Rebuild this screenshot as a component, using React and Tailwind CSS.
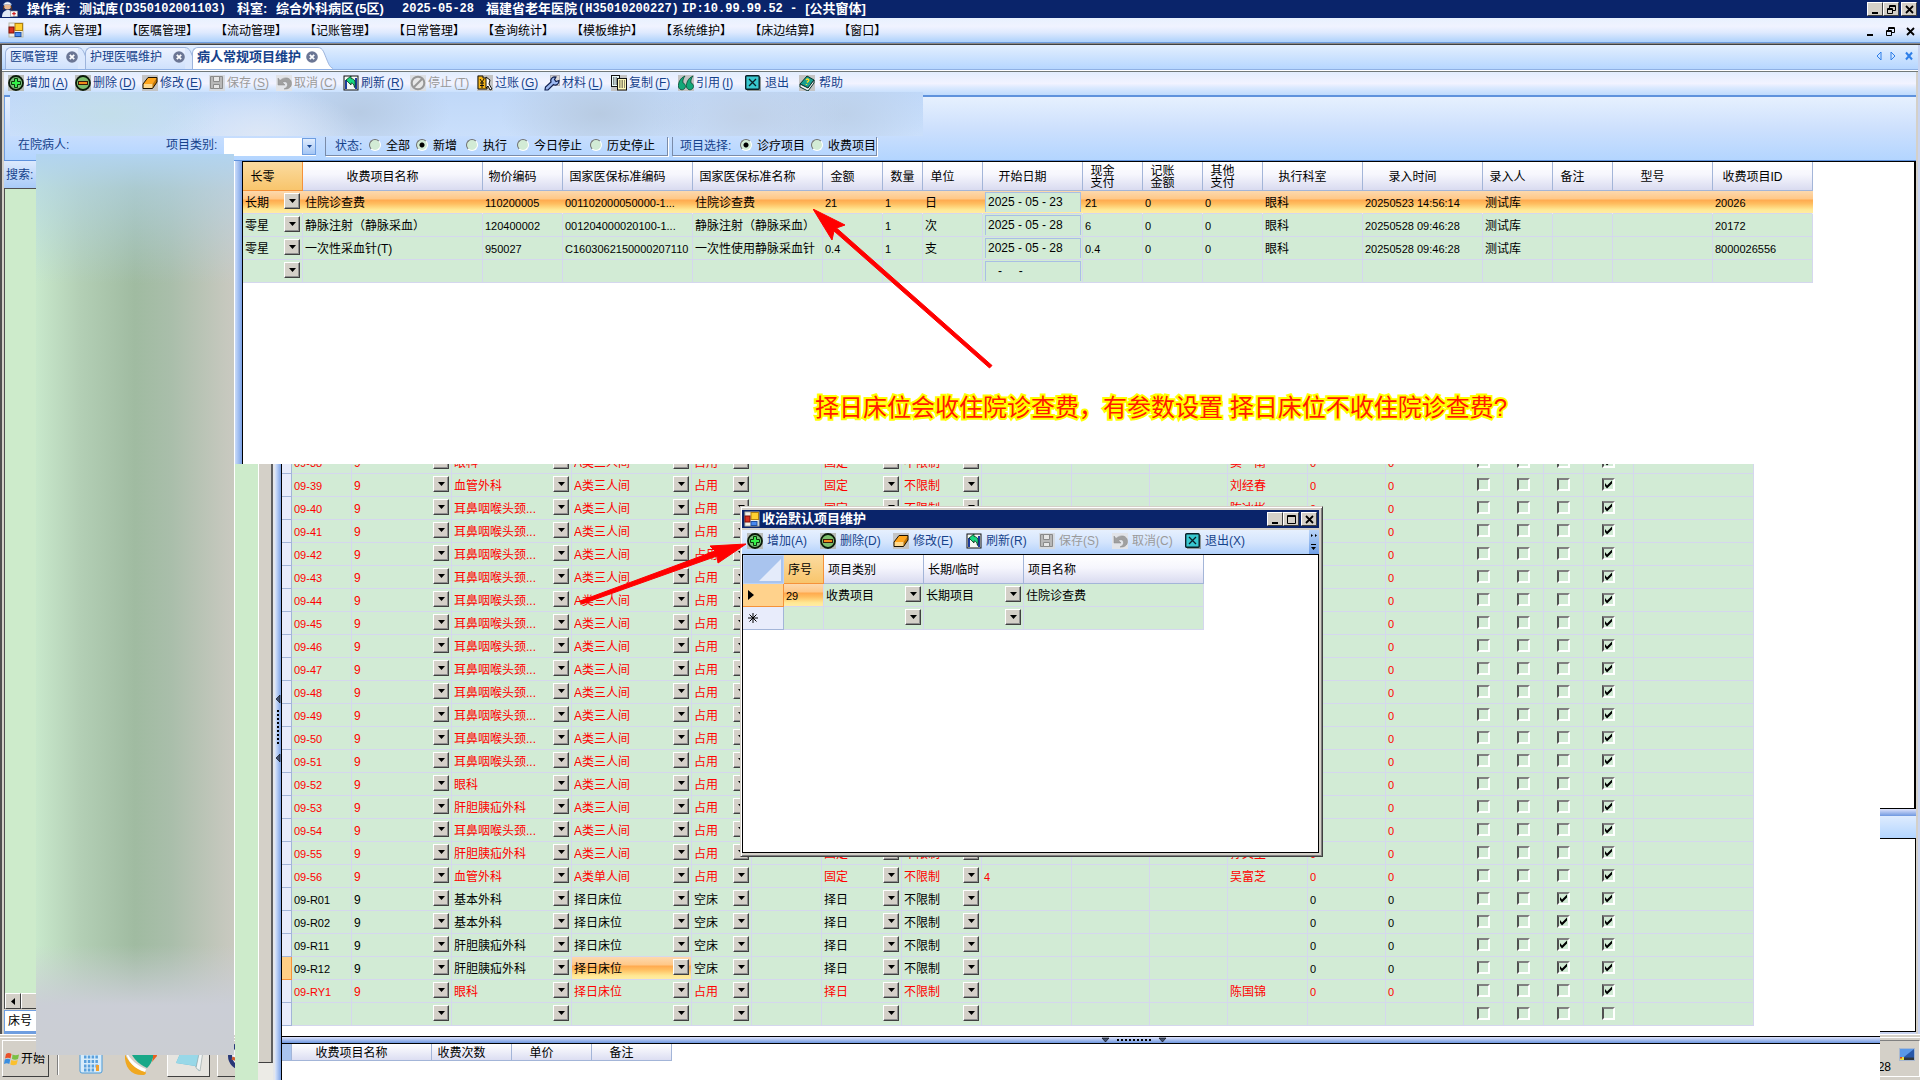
import React from "react";

const MENUS = ["病人管理", "医嘱管理", "流动管理", "记账管理", "日常管理", "查询统计", "模板维护", "系统维护", "床边结算", "窗口"];

/* ---------- icons ---------- */

function Icon({ name, className = "" }) {
  return (
    <svg viewBox="0 0 16 16" className={"size-4 shrink-0 " + className} aria-hidden="true">
      {ICONS[name]}
    </svg>
  );
}

const ICONS = {
  add: (
    <>
      <rect width="16" height="16" fill="#b9bdb9" />
      <circle cx="8" cy="8" r="7" fill="#7cbf7c" stroke="#0a1a0a" strokeWidth="1.8" />
      <path d="M6.5 3.5h3v3h3v3h-3v3h-3v-3h-3v-3h3z" fill="#35f04a" stroke="#0a3a0a" />
    </>
  ),
  remove: (
    <>
      <rect width="16" height="16" fill="#b9bdb9" />
      <circle cx="8" cy="8" r="7" fill="#7cbf6c" stroke="#0a1a0a" strokeWidth="1.8" />
      <rect x="3.5" y="6.5" width="9" height="3" fill="#f08a18" stroke="#3a1a0a" />
    </>
  ),
  edit: (
    <>
      <rect width="16" height="16" fill="#c4c4c4" />
      <path d="M1 9L6 2.500H15L10.500 9z" fill="#ffa51c" />
      <path d="M1 9H10.500V13.500H1z" fill="#ffd98c" />
      <path d="M10.500 9L15 2.500V7L10.500 13.500z" fill="#c87800" />
      <path d="M1 9L6 2.500H15V7L10.500 13.500H1z" fill="none" stroke="#1a1000" />
    </>
  ),
  save: (
    <>
      <rect width="16" height="16" fill="#d6dae0" />
      <path d="M1.500 1.500h12v12h-12z" fill="#b8b8b8" stroke="#8a8a8a" />
      <path d="M4.500 1.500h6v5h-6zM4.500 9.500h6v4h-6z" fill="#e6e6e6" stroke="#8a8a8a" />
    </>
  ),
  undo: (
    <>
      <rect width="16" height="16" fill="#e2e4e8" />
      <path d="M2 3v7h7L6.500 7.500c3-2 5.500 0 5 3-.5 1.500-1.500 2.500-3.500 3.500 4.500.5 7.500-2 7.500-5.500 0-6-7-7.500-11.500-3z" fill="#a0a0a0" stroke="#888" strokeWidth=".5" />
    </>
  ),
  refresh: (
    <>
      <rect x="1" y="1" width="14" height="14" fill="#f4f8f4" stroke="#111" />
      <path d="M2 5h2v9H2zM12 3h2v11h-2z" fill="#1c3c9c" />
      <path d="M3 5l5-4v2.500c4 0 5 4 3.500 9-.5-3-1.500-4.500-3.500-4.500v2z" fill="#18d880" stroke="#083018" strokeWidth=".8" />
    </>
  ),
  stop: (
    <>
      <rect width="16" height="16" fill="#dcdfe4" />
      <circle cx="8" cy="8" r="6.300" fill="#e8e8e8" stroke="#979797" strokeWidth="2" />
      <path d="M12 4L4 12" stroke="#979797" strokeWidth="2" />
    </>
  ),
  post: (
    <>
      <rect width="16" height="16" fill="#c4c4c4" />
      <path d="M1 1h5v2h4v11H1z" fill="#f5b418" stroke="#111" />
      <path d="M3 4l2 3 2-3M3 8h4M3 10.500h4M5 7v6" stroke="#111" fill="none" />
      <path d="M9 2l4 3-1 4 3 5-2 1-2-4-2 2z" fill="#fff" stroke="#111" />
    </>
  ),
  wrench: (
    <>
      <rect x="6.500" y=".5" width="9" height="10" fill="#dcd8d4" stroke="#b0b0b8" />
      <path d="M1 15l.5-3L7 7C6 4 8.500 1.500 12 2L10.500 4.500l1.500 2 3-1c0 4-3 5.500-5.500 4L4 15z" fill="#9db8f0" stroke="#102050" strokeWidth="1.200" />
    </>
  ),
  copy: (
    <>
      <rect width="16" height="16" fill="#c4c4c4" />
      <rect x=".5" y=".5" width="8" height="11" fill="#e8fafa" stroke="#111" />
      <rect x="6.500" y="3.500" width="9" height="11.500" fill="#fff8b8" stroke="#111" />
      <path d="M2 3h4M2 5h4M2 7h4M2 9h4M8 6h6M8 8h6M8 10h6M8 12h6" stroke="#222" strokeDasharray="1.500 1" />
    </>
  ),
  quote: (
    <>
      <rect width="16" height="16" fill="#c4c4c4" />
      <path d="M7 1C2 3 0 8 .5 12c1 4 6.500 3.500 7-.5 0-2-1-3-2.500-3.500C4.500 5 5.500 3 7 1zM15 1c-5 2-7 7-6.500 11 1 4 6.500 3.500 7-.5 0-2-1-3-2.500-3.500C12.500 5 13.500 3 15 1z" fill="#12a878" stroke="#064a34" strokeWidth=".8" />
    </>
  ),
  exit: (
    <>
      <rect x="2" y="2" width="14" height="14" fill="#909898" />
      <rect x=".7" y=".7" width="13.500" height="13.500" rx="1" fill="#38c8d0" stroke="#0a2028" strokeWidth="1.400" />
      <path d="M4 4l7 7M11 4l-7 7" stroke="#0a2028" strokeWidth="1.300" />
    </>
  ),
  help: (
    <>
      <rect width="16" height="16" fill="#c4c4c4" />
      <path d="M1 9l7-8 7 4-6 8z" fill="#18a090" stroke="#04302c" />
      <path d="M1 9v3l8 4 6-8V5l-6 8z" fill="#f4f4f4" stroke="#04302c" />
      <path d="M7 5c2-2 4 0 2 1.500l-1 1M7.500 9v1" stroke="#ffe020" strokeWidth="1.400" fill="none" />
    </>
  ),
  app: (
    <>
      <rect x="1" y="1" width="14" height="14" fill="#f0f0e8" stroke="#b8b8a8" />
      <rect x="7" y="1.500" width="7.500" height="7" fill="#ffd030" stroke="#b08010" />
      <rect x="1" y="5" width="5" height="6" fill="#d83020" stroke="#801008" />
      <rect x="7" y="10.500" width="6" height="4" fill="#4888f0" stroke="#2050a0" />
    </>
  ),
};

/* ---------- small pieces ---------- */

function ArrowBox({ className = "" }) {
  return (
    <span
      className={
        "pointer-events-none flex size-4 shrink-0 items-center justify-center border border-t-white border-l-white border-r-[#404040] border-b-[#404040] bg-[#d4d0c8] shadow-[inset_-1px_-1px_0_#909090] " +
        className
      }
    >
      <svg viewBox="0 0 7 4" className="h-1 w-[7px]" aria-hidden="true">
        <path d="M0 0h7L3.500 4z" fill="#000" />
      </svg>
    </span>
  );
}

function DropCell({ value, label }) {
  return (
    <div className="flex h-[22px] items-center pr-[2px] pl-[2px]">
      <select aria-label={label} defaultValue={value} className="mt-0.5 h-[18px] min-w-0 flex-1 appearance-none overflow-hidden bg-transparent text-ellipsis outline-none">
        <option value={value}>{value}</option>
      </select>
      <ArrowBox className="mb-0.5" />
    </div>
  );
}

function Check({ on, label }) {
  return (
    <span className="relative mx-auto mb-0.5 block size-[13px]">
      <input
        type="checkbox"
        aria-label={label}
        defaultChecked={on}
        className="block size-[13px] appearance-none border-2 border-t-[#808080] border-r-white border-b-white border-l-[#505050] bg-[#d2ebd5]"
      />
      {on && (
        <svg viewBox="0 0 13 13" className="pointer-events-none absolute inset-0 size-[13px]" aria-hidden="true">
          <path d="M3 5v3l2 2.500L10 5.500V2.500L5 7.500z" fill="#000" />
        </svg>
      )}
    </span>
  );
}

const ascii = (s) => /^[\x00-\x7f]*$/.test(s);

function Txt({ children }) {
  return (
    <div className={"truncate pt-0.5 pl-[2px] " + (ascii(children) ? "text-[11px] leading-[14px]" : "text-xs leading-[14px]")}>{children}</div>
  );
}

const CELL = "h-[23px] border-r border-b border-[#d5d7ee] p-0 ";
const HOT = "bg-[linear-gradient(#fcd9ae_0%,#ffc888_35%,#ffab50_42%,#ffbe60_58%,#ffe894_85%,#ffeca4_100%)] ";
const HEAD =
  "h-[29px] border-r border-b border-[#a3b5d8] bg-[linear-gradient(#ffffff,#f6f6fd_45%,#d9dbf0)] p-0 pt-0.5 text-center align-middle text-xs font-normal leading-3 ";
const HEAD_HOT = "h-[29px] border-r border-b border-[#f5923a] bg-[linear-gradient(#fbdba0,#f8c56c)] p-0 pt-0.5 text-center align-middle text-xs font-normal leading-3 ";

/* ---------- window chrome ---------- */

function TitleBar() {
  const mono = "font-['Liberation_Mono'] text-xs leading-[18px] ";
  return (
    <header className="flex h-[18px] shrink-0 items-center overflow-hidden bg-[#0a246a] text-[13px] leading-[18px] font-bold whitespace-nowrap text-white">
      <svg viewBox="0 0 18 18" className="size-[18px] shrink-0" aria-hidden="true">
        <path d="M2 17c0-5 3-7 6-7s5 2 5 7z" fill="#dfe9f5" />
        <circle cx="7.500" cy="6" r="3.500" fill="#e8b890" />
        <path d="M3.500 5C4 1 11 1 11.500 5 9 4 6 4 3.500 5z" fill="#fff" stroke="#7898c8" strokeWidth=".6" />
        <path d="M4 6c-1 2-.5 3 0 4M11 6c1 2 .5 3 0 4" stroke="#6a3a18" />
        <rect x="10.500" y="11" width="7" height="5.500" fill="#f4f4f4" stroke="#888" strokeWidth=".6" />
        <path d="M14 12v3.500M12.200 13.700h3.600" stroke="#d02020" strokeWidth="1.200" />
      </svg>
      <h1 className="flex pl-[9px]">
        <span className="w-[52px]">操作者:</span>
        <span className="w-[39px]">测试库</span>
        <span className={mono + "w-[119px]"}>(D350102001103)</span>
        <span className="w-[39px]">科室:</span>
        <span className="w-[79px]">综合外科病区</span>
        <span className="w-[47px]">(5区)</span>
        <span className={mono + "w-[84px]"}>2025-05-28</span>
        <span className="w-[92px]">福建省老年医院</span>
        <span className={mono + "w-[104px]"}>(H35010200227)</span>
        <span className={mono + "pr-2"}>IP:10.99.99.52 -</span>
        <span>[公共窗体]</span>
      </h1>
      <div className="ml-auto flex pr-[3px]">
        <CaptionButton kind="min" />
        <CaptionButton kind="restore" />
        <CaptionButton kind="close" className="ml-0.5" />
      </div>
    </header>
  );
}

const GLYPHS = {
  min: <path d="M2 8h6v2H2z" fill="currentColor" />,
  max: <path d="M1.500 1.500h8v8h-8zM1.500 2.500h8" fill="none" stroke="currentColor" />,
  restore: <path d="M3.500 4V1.500h6v5H7M3.500 2.500h6M1.500 4.500h5v5h-5zM1.500 5.500h5" fill="none" stroke="currentColor" />,
  close: <path d="M2 2l7 7M9 2l-7 7" fill="none" stroke="currentColor" strokeWidth="1.800" />,
};

function CaptionButton({ kind, className = "" }) {
  return (
    <button
      type="button"
      aria-label={kind}
      className={
        "flex h-3.5 w-4 items-center justify-center border border-t-white border-l-white border-r-[#404040] border-b-[#404040] bg-[#d4d0c8] text-black " +
        className
      }
    >
      <svg viewBox="0 0 11 11" className="size-[11px]" aria-hidden="true">
        {GLYPHS[kind]}
      </svg>
    </button>
  );
}

function MenuBar() {
  return (
    <nav className="flex h-6 shrink-0 items-center bg-[linear-gradient(#e8f1fe,#f0f3ff_35%,#dfeafe_60%,#aed2fb)] pt-0.5 text-black">
      <Icon name="app" className="mb-0.5 ml-2" />
      <div className="ml-[13px] flex gap-[17px] whitespace-nowrap">
        {MENUS.map((m) => (
          <button type="button" key={m}>{`【${m}】`}</button>
        ))}
      </div>
      <div className="ml-auto flex gap-[9px] pr-1">
        {["min", "restore", "close"].map((k) => (
          <button type="button" key={k} aria-label={k} className="text-black">
            <svg viewBox="0 0 11 11" className="size-[11px]" aria-hidden="true">
              {GLYPHS[k]}
            </svg>
          </button>
        ))}
      </div>
    </nav>
  );
}

function Tab({ title, active, className }) {
  const fill = active ? "#ffffff" : "#dbe8fd";
  return (
    <div className={"flex h-[22px] shrink-0 " + className}>
      <div
        className={
          "flex flex-1 items-center justify-between rounded-tl-md border-t border-l border-[#9db4dc] pb-[3px] pl-1 whitespace-nowrap " +
          (active ? "bg-white text-[13px] font-bold" : "bg-[linear-gradient(#edf3ff,#cfe1fc)]")
        }
      >
        <button type="button">{title}</button>
        <button type="button" aria-label={"关闭" + title}>
          <svg viewBox="0 0 12 12" className="size-3" aria-hidden="true">
            <circle cx="6" cy="6" r="5.800" fill="#6b7694" />
            <path d="M3.800 3.800l4.400 4.400M8.200 3.800L3.800 8.200" stroke="#fff" strokeWidth="1.800" />
          </svg>
        </button>
      </div>
      <svg viewBox="0 0 15 22" className="h-[22px] w-[15px]" aria-hidden="true">
        <path d="M0 .5C5 .5 6 6 9 13c2 5 3 7 6 8.500V22H0z" fill={fill} />
        <path d="M0 .5C5 .5 6 6 9 13c2 5 3 7 6 8.500" fill="none" stroke="#9db4dc" />
      </svg>
    </div>
  );
}

function TabStrip() {
  return (
    <div className="flex h-6 shrink-0 items-end bg-[linear-gradient(#e3effe,#b6d6ff)] pl-[3px] text-[#15428b]">
      <Tab title="医嘱管理" className="w-[88px]" />
      <Tab title="护理医嘱维护" className="-ml-2 w-[115px]" />
      <Tab title="病人常规项目维护" active className="-ml-2 w-[141px]" />
      <div className="mb-2 ml-auto flex gap-2 pr-1 text-[#2f7fe8]">
        <button type="button" aria-label="向左">
          <svg viewBox="0 0 6 10" className="h-2.5 w-1.5" aria-hidden="true"><path d="M5 1v8L1 5z" fill="none" stroke="currentColor" /></svg>
        </button>
        <button type="button" aria-label="向右">
          <svg viewBox="0 0 6 10" className="h-2.5 w-1.5" aria-hidden="true"><path d="M1 1v8l4-4z" fill="none" stroke="currentColor" /></svg>
        </button>
        <button type="button" aria-label="关闭">
          <svg viewBox="0 0 10 10" className="size-2.5" aria-hidden="true"><path d="M2 1.500l6 7M8 1.500l-6 7" stroke="currentColor" strokeWidth="2" /></svg>
        </button>
      </div>
    </div>
  );
}

const TOOLS = [
  ["add", "增加", "A"],
  ["remove", "删除", "D"],
  ["edit", "修改", "E"],
  ["save", "保存", "S", true],
  ["undo", "取消", "C", true],
  ["refresh", "刷新", "R"],
  ["stop", "停止", "T", true],
  ["post", "过账", "G"],
  ["wrench", "材料", "L"],
  ["copy", "复制", "F"],
  ["quote", "引用", "I"],
];

function ToolBar() {
  return (
    <div className="flex h-[23px] shrink-0 items-center bg-[linear-gradient(#e2edfe,#f2f3ff_50%,#d9e8fe_70%,#bfdbfd)] pb-0.5 pl-1 whitespace-nowrap text-[#15428b]">
      {TOOLS.map(([icon, text, key, off]) => (
        <button type="button" key={text} disabled={off} className={"flex w-[67px] items-center gap-0.5 " + (off ? "text-[#9a9a9a]" : "")}>
          <Icon name={icon} />
          <span>
            {text}
            <span className="pl-0.5">
              (<u className="underline-offset-2">{key}</u>)
            </span>
          </span>
        </button>
      ))}
      <button type="button" className="flex w-[54px] items-center gap-1">
        <Icon name="exit" />
        退出
      </button>
      <button type="button" className="flex items-center gap-1">
        <Icon name="help" />
        帮助
      </button>
    </div>
  );
}

function Radio({ name, label, on, className = "" }) {
  return (
    <label className={"flex items-center gap-[5px] " + className}>
      <input
        type="radio"
        name={name}
        defaultChecked={on}
        className="mb-0.5 size-3 appearance-none rounded-full border border-t-[#707070] border-r-white border-b-white border-l-[#707070] bg-[#d2ebd5] checked:bg-[radial-gradient(circle,#000_0_2px,#d2ebd5_3px)]"
      />
      {label}
    </label>
  );
}

function FilterPanel() {
  return (
    <section className="relative flex h-[63px] shrink-0 items-end border-l border-[#6f9ee0] bg-[linear-gradient(#e6f0fe,#cde0fd_50%,#b3d5ff)] pb-1 pl-[13px] whitespace-nowrap text-black">
      {/* obscured patient banner */}
      <div className="absolute -top-[5px] left-[5px] h-11 w-[913px] bg-[radial-gradient(ellipse_110px_50px_at_100px_22px,#c3deea_0%,transparent_100%),radial-gradient(ellipse_100px_50px_at_250px_44px,#dde7f6_0%,transparent_100%),radial-gradient(ellipse_90px_50px_at_350px_20px,#b7cbe4_0%,transparent_100%),radial-gradient(ellipse_100px_50px_at_590px_22px,#b8cbe2_0%,transparent_100%),radial-gradient(ellipse_100px_50px_at_740px_24px,#c0d1e8_0%,transparent_100%),radial-gradient(ellipse_80px_50px_at_835px_22px,#bdd1ea_0%,transparent_100%),linear-gradient(#c0d8f8,#cadffb)]" />
      <span className="mb-1 w-[148px] text-[#15428b]">在院病人:</span>
      <label htmlFor="item-kind" className="mb-1 w-[58px] text-[#15428b]">项目类别:</label>
      <div className="flex h-[18px] w-[92px] border-b border-white bg-white">
        <select id="item-kind" className="min-w-0 flex-1 appearance-none bg-white" defaultValue="">
          <option value=""></option>
        </select>
        <span className="pointer-events-none flex w-3.5 items-center justify-center border border-[#6f9ee0] bg-[linear-gradient(#e0ecfd,#a3c6f5)]">
          <svg viewBox="0 0 7 4" className="h-[3px] w-[5px]" aria-hidden="true"><path d="M0 0h7L3.500 4z" fill="#15428b" /></svg>
        </span>
      </div>
      <fieldset className="ml-[9px] flex h-[19px] w-[343px] items-center border-r border-b border-l border-[#7a8ba8] pl-[9px] shadow-[1px_1px_0_#fff]">
        <span className="w-[34px] text-[#15428b]">状态:</span>
        <Radio name="state" label="全部" className="w-[47px]" />
        <Radio name="state" label="新增" on className="w-[50px]" />
        <Radio name="state" label="执行" className="w-[51px]" />
        <Radio name="state" label="今日停止" className="w-[73px]" />
        <Radio name="state" label="历史停止" />
      </fieldset>
      <fieldset className="ml-1 flex h-[19px] w-[205px] items-center border-r border-b border-l border-[#7a8ba8] pl-[7px] shadow-[1px_1px_0_#fff]">
        <span className="w-[60px] text-[#15428b]">项目选择:</span>
        <Radio name="pick" label="诊疗项目" on className="w-[71px]" />
        <Radio name="pick" label="收费项目" />
      </fieldset>
    </section>
  );
}

/* ---------- charge grid ---------- */

const CHARGE_COLS = [
  ["长零", 60], ["收费项目名称", 180], ["物价编码", 80], ["国家医保标准编码", 130], ["国家医保标准名称", 130], ["金额", 60],
  ["数量", 40], ["单位", 60], ["开始日期", 100], ["现金支付", 60], ["记账金额", 60], ["其他支付", 60], ["执行科室", 100],
  ["录入时间", 120], ["录入人", 70], ["备注", 60], ["型号", 100], ["收费项目ID", 100],
];

const CHARGES = [
  ["长期", "住院诊查费", "110200005", "001102000050000-1...", "住院诊查费", "21", "1", "日", "2025 - 05 - 23", "21", "0", "0", "眼科", "20250523 14:56:14", "测试库", "", "", "20026"],
  ["零星", "静脉注射（静脉采血）", "120400002", "001204000020100-1...", "静脉注射（静脉采血）", "6", "1", "次", "2025 - 05 - 28", "6", "0", "0", "眼科", "20250528 09:46:28", "测试库", "", "", "20172"],
  ["零星", "一次性采血针(T)", "950027", "C1603062150000207110", "一次性使用静脉采血针", "0.4", "1", "支", "2025 - 05 - 28", "0.4", "0", "0", "眼科", "20250528 09:46:28", "测试库", "", "", "8000026556"],
  ["", "", "", "", "", "", "", "", "   -     -", "", "", "", "", "", "", "", "", ""],
];

const STACKED = ["现金支付", "记账金额", "其他支付"];

function ChargeGrid() {
  return (
    <table className="w-[1570px] table-fixed border-separate border-spacing-0 text-black">
      <colgroup>
        {CHARGE_COLS.map(([n, w]) => (
          <col key={n} style={{ width: w }} />
        ))}
      </colgroup>
      <thead>
        <tr>
          {CHARGE_COLS.map(([n, w], i) => (
            <th key={n} className={i === 0 ? HEAD_HOT : HEAD}>
              <div className={w === 40 ? "" : "pr-[20px] whitespace-nowrap"}>
                {STACKED.includes(n) ? (
                  <>
                    {n.slice(0, 2)}
                    <br />
                    {n.slice(2)}
                  </>
                ) : (
                  n
                )}
              </div>
            </th>
          ))}
        </tr>
      </thead>
      <tbody>
        {CHARGES.map((row, r) => (
          <tr key={r}>
            {row.map((v, c) => (
              <td key={c} className={CELL + (r === 0 ? HOT + "border-r-transparent" : "bg-[#d2ebd5]")}>
                {c === 0 ? (
                  <DropCell value={v} label="长零" />
                ) : c === 8 ? (
                  <input
                    aria-label="开始日期"
                    defaultValue={v}
                    className="mx-0.5 block h-5 w-24 border-x border-t border-[#a9bfe4] bg-[#d2ebd5] pb-0.5 pl-0.5 outline-none"
                  />
                ) : (
                  <Txt>{v}</Txt>
                )}
              </td>
            ))}
          </tr>
        ))}
      </tbody>
    </table>
  );
}

/* ---------- bed grid ---------- */

const BED_COLS = [10, 60, 100, 120, 120, 60, 70, 80, 80, 90, 78, 78, 80, 78, 78, 40, 40, 40, 50, 120];
const ENT = "耳鼻咽喉头颈...";
const LIVER = "肝胆胰疝外科";
const bed = (no, dept, name = "", mark = "") => ({ no, dept, kind: "A类三人间", state: "占用", mode: "固定", name, mark, red: true });
const dayBed = (no, dept) => ({ no, dept, kind: "择日床位", state: "空床", mode: "择日", name: "", mark: "", day: true });

const BEDS = [
  bed("09-38", "眼科", "窦一南"),
  bed("09-39", "血管外科", "刘经春"),
  bed("09-40", ENT, "陈冰彬"),
  bed("09-41", ENT), bed("09-42", ENT), bed("09-43", ENT), bed("09-44", ENT), bed("09-45", ENT), bed("09-46", ENT),
  bed("09-47", ENT), bed("09-48", ENT), bed("09-49", ENT), bed("09-50", ENT), bed("09-51", ENT),
  bed("09-52", "眼科"),
  bed("09-53", LIVER),
  bed("09-54", ENT),
  bed("09-55", LIVER, "孙文生"),
  { ...bed("09-56", "血管外科", "吴富芝", "4"), kind: "A类单人间" },
  dayBed("09-R01", "基本外科"),
  dayBed("09-R02", "基本外科"),
  dayBed("09-R11", LIVER),
  { ...dayBed("09-R12", LIVER), current: true },
  { ...bed("09-RY1", "眼科", "陈国锦"), kind: "择日床位", mode: "择日" },
  { blank: true },
];

function BedGrid() {
  return (
    <table className="-mt-[13px] w-[1472px] table-fixed border-separate border-spacing-0">
      <colgroup>
        {BED_COLS.map((w, i) => (
          <col key={i} style={{ width: w }} />
        ))}
      </colgroup>
      <tbody>
        {BEDS.map((b, i) => {
          const zero = b.blank ? "" : "0";
          const cell = CELL + "bg-[#d2ebd5]";
          return (
            <tr key={i} className={b.red ? "text-[#ff0000]" : "text-black"}>
              <td className={"h-[23px] border-r border-b p-0 " + (b.current ? "border-[#f5923a] bg-[#ffcf86]" : "border-[#a3b5d8] bg-[#e8ecfb]")} />
              <td className={cell}><Txt>{b.no || ""}</Txt></td>
              <td className={cell}><DropCell value={b.blank ? "" : "9"} label="楼层" /></td>
              <td className={cell}><DropCell value={b.dept || ""} label="科室" /></td>
              <td className={b.current ? CELL + HOT : cell}><DropCell value={b.kind || ""} label="床位类型" /></td>
              <td className={cell}><DropCell value={b.state || ""} label="床位状态" /></td>
              <td className={cell} />
              <td className={cell}><DropCell value={b.mode || ""} label="床位方式" /></td>
              <td className={cell}><DropCell value={b.blank ? "" : "不限制"} label="性别限制" /></td>
              <td className={cell}><Txt>{b.mark || ""}</Txt></td>
              <td className={cell} />
              <td className={cell} />
              <td className={cell}><Txt>{b.name || ""}</Txt></td>
              <td className={cell}><Txt>{zero}</Txt></td>
              <td className={cell}><Txt>{zero}</Txt></td>
              <td className={cell}><Check label="选项一" /></td>
              <td className={cell}><Check label="选项二" /></td>
              <td className={cell}><Check label="择日" on={b.day} /></td>
              <td className={cell}><Check label="有效" on={!b.blank} /></td>
              <td className={cell} />
            </tr>
          );
        })}
      </tbody>
    </table>
  );
}

function BedWindow() {
  return (
    <section className="absolute top-[464px] right-10 bottom-0 left-[235px] flex overflow-hidden bg-white">
      <div className="w-[23px] shrink-0 bg-[#cdebcb]" />
      <div className="flex w-[15px] shrink-0 flex-col bg-[#ecebe6]">
        <div className="flex-1 border-r-2 border-b border-l border-l-white border-r-[#606060] border-b-[#404040] bg-[#d4d0c8]" />
        <div className="h-[17px]" />
      </div>
      <div className="w-0.5 shrink-0 bg-[#e4e6ea]" />
      <div className="flex w-1.5 shrink-0 flex-col items-center bg-[linear-gradient(90deg,#dbe6fb,#7ba2e6)] pt-[230px]">
        <svg viewBox="0 0 6 70" className="h-[70px] w-1.5" aria-hidden="true">
          <path d="M5 1v8L1 5zM5 60v8L1 64z" fill="#405070" stroke="#000" strokeWidth=".6" />
          <path d="M3 16v36" stroke="#000" strokeWidth="2" strokeDasharray="2 2" />
        </svg>
      </div>
      <div className="flex min-w-0 flex-1 flex-col border-l border-black">
        <div className="min-h-0 flex-1 overflow-hidden">
          <BedGrid />
        </div>
        <div className="flex h-2 shrink-0 items-center justify-center border-y border-black bg-[linear-gradient(#dfe3fb,#6f98e0)] pl-[106px]">
          <svg viewBox="0 0 66 6" className="h-1.5 w-[66px]" aria-hidden="true">
            <path d="M1 1h7L4.500 5zM58 1h7l-3.500 4z" fill="#405070" stroke="#000" strokeWidth=".6" />
            <path d="M16 3h35" stroke="#000" strokeWidth="2" strokeDasharray="2 2" />
          </svg>
        </div>
        <div className="h-9 shrink-0">
          <table className="w-[390px] table-fixed border-separate border-spacing-0 text-black">
            <thead>
              <tr className="leading-3">
                <th className="w-[10px] border-r border-b border-[#a3b5d8] bg-[#a9c4ee] p-0" />
                {[["收费项目名称", "w-[140px]"], ["收费次数", "w-20"], ["单价", "w-20"], ["备注", "w-20"]].map(([n, w]) => (
                  <th key={n} className={w + " h-[17px] border-r border-b border-[#a3b5d8] bg-[linear-gradient(#fff,#dcdef2)] p-0 pt-0.5 pr-[20px] text-xs leading-3 font-normal whitespace-nowrap"}>
                    {n}
                  </th>
                ))}
              </tr>
            </thead>
          </table>
        </div>
      </div>
    </section>
  );
}

/* ---------- dialog ---------- */

const DIALOG_TOOLS = [
  ["add", "增加(A)"], ["remove", "删除(D)"], ["edit", "修改(E)"], ["refresh", "刷新(R)"], ["save", "保存(S)", true], ["undo", "取消(C)", true], ["exit", "退出(X)"],
];

function Dialog() {
  const left = "pl-1 text-left ";
  return (
    <div role="dialog" aria-label="收治默认项目维护" className="absolute top-[506px] left-[740px] flex h-[351px] w-[583px] flex-col border border-t-[#d4d0c8] border-r-[#404040] border-b-[#404040] border-l-[#d4d0c8] bg-[#d4d0c8] pt-[3px] pr-[3px] pb-[3px] pl-px shadow-[inset_1px_1px_0_#fff,inset_-1px_-1px_0_#808080]">
      <div className="flex h-[18px] shrink-0 items-center bg-[#0a246a] pr-0.5 pl-0.5 text-[13px] font-bold text-white">
        <Icon name="app" />
        <h2 className="pl-0.5">收治默认项目维护</h2>
        <div className="ml-auto flex">
          <CaptionButton kind="min" />
          <CaptionButton kind="max" />
          <CaptionButton kind="close" className="ml-0.5" />
        </div>
      </div>
      <div className="mt-0.5 flex h-6 shrink-0 items-center bg-[linear-gradient(#e6f0fe,#d5e5fd_50%,#b3d2fc)] pl-[5px] whitespace-nowrap text-[#15428b]">
        {DIALOG_TOOLS.map(([icon, text, off]) => (
          <button type="button" key={text} disabled={off} className={"mb-0.5 flex w-[73px] items-center gap-1 " + (off ? "text-[#9a9a9a]" : "")}>
            <Icon name={icon} />
            {text}
          </button>
        ))}
        <button type="button" aria-label="更多" className="ml-auto flex h-full w-2.5 items-center justify-center bg-[linear-gradient(#b9d4f8,#6f9fe6)]">
          <svg viewBox="0 0 8 18" className="h-[18px] w-2" aria-hidden="true">
            <path d="M1 1l2 1.500-2 1.500zM5 1l2 1.500-2 1.500zM1 11h5v1H1zM1 14h5l-2.500 3z" fill="#000" />
          </svg>
        </button>
      </div>
      <div className="min-h-0 flex-1 border border-black bg-white">
        <table className="w-[461px] table-fixed border-separate border-spacing-0 text-black">
          <colgroup>
            <col className="w-[41px]" />
            <col className="w-10" />
            <col className="w-[100px]" />
            <col className="w-[100px]" />
            <col className="w-[180px]" />
          </colgroup>
          <thead>
            <tr>
              <th className="h-[29px] border border-[#b9d2f8] bg-[#a9c4ee] p-0">
                <svg viewBox="0 0 22 22" className="mr-0.5 ml-auto h-[22px] w-[22px]" aria-hidden="true"><path d="M22 0v22H0z" fill="#e4ebfa" /></svg>
              </th>
              <th className={HEAD_HOT + left}>序号</th>
              <th className={HEAD + left}>项目类别</th>
              <th className={HEAD + left}>长期/临时</th>
              <th className={HEAD + left}>项目名称</th>
            </tr>
          </thead>
          <tbody>
            <tr>
              <td className="h-[23px] border-r border-b border-[#f5923a] bg-[#ffd28c] p-0 pl-[5px]">
                <svg viewBox="0 0 6 10" className="h-2.5 w-1.5" aria-hidden="true"><path d="M0 0v10l6-5z" fill="#000" /></svg>
              </td>
              <td className={CELL + HOT}><Txt>29</Txt></td>
              <td className={CELL + "bg-[#d2ebd5]"}><DropCell value="收费项目" label="项目类别" /></td>
              <td className={CELL + "bg-[#d2ebd5]"}><DropCell value="长期项目" label="长期/临时" /></td>
              <td className={CELL + "bg-[#d2ebd5]"}><Txt>住院诊查费</Txt></td>
            </tr>
            <tr>
              <td className="h-[23px] border-r border-b border-[#a3b5d8] bg-[#e8ecfb] p-0 pl-[5px]">
                <svg viewBox="0 0 10 10" className="size-2.5" aria-hidden="true"><path d="M5 0v10M0 5h10M1.500 1.500l7 7M8.500 1.500l-7 7" stroke="#000" /></svg>
              </td>
              <td className={CELL + "bg-[#d2ebd5]"} />
              <td className={CELL + "bg-[#d2ebd5]"}><DropCell value="" label="项目类别" /></td>
              <td className={CELL + "bg-[#d2ebd5]"}><DropCell value="" label="长期/临时" /></td>
              <td className={CELL + "bg-[#d2ebd5]"} />
            </tr>
          </tbody>
        </table>
      </div>
    </div>
  );
}

/* ---------- taskbar ---------- */

function TaskBar() {
  return (
    <footer className="flex h-[46px] shrink-0 border-t border-white bg-[#d4d0c8] pt-[5px] pb-[3px] pl-0.5 text-black shadow-[inset_0_2px_0_#d4d0c8,inset_0_3px_0_#fff]">
      <button type="button" className="flex w-[47px] items-center gap-px border border-t-white border-r-[#404040] border-b-[#404040] border-l-white pl-px">
        <svg viewBox="0 0 16 16" className="size-4" aria-hidden="true">
          <path d="M2 3c2-1.500 4-1 5.500 0L6.500 7.500C5 6.500 3 6.500 1 7.500z" fill="#e8502a" />
          <path d="M8.500 3.500c2 1 4 1 6.500 0l-1 4.500c-2 1-4 1-6 0z" fill="#7ac043" />
          <path d="M.8 8.500c2-1 4-1 5.500 0L5.300 13c-1.500-1-3.500-1-5.300 0z" fill="#3a8ee0" />
          <path d="M7.300 9c2 1 4 1 6.500 0l-1.200 4.500c-2 1-4.500 1-6.300 0z" fill="#fbc02d" />
        </svg>
        开始
      </button>
      <span className="mx-2 my-0.5 w-0.5 border-r border-white bg-[#808080]" />
      <svg viewBox="0 0 24 32" className="mt-0.5 ml-3 h-8 w-6" aria-hidden="true">
        <rect x="1" y="1" width="22" height="30" rx="2" fill="#d8ecfa" stroke="#4a9ad8" />
        <path d="M4 4h16v6H4z" fill="#7ab8e8" />
        <path d="M5 15h14M5 19.500h14M5 24h14M5 28h10" stroke="#5aa0dc" strokeWidth="3" strokeDasharray="2.500 1.300" />
        <rect x="17" y="23" width="3" height="6" fill="#f0a030" />
      </svg>
      <svg viewBox="0 0 34 34" className="mt-0.5 ml-[21px] size-[34px]" aria-hidden="true">
        <path d="M5 4h24c2 8 0 16-6 22C14 22 6 14 5 4z" fill="#18a888" />
        <path d="M1 12c3 8 10 14 19 16 2 2 3 4 0 5C8 34 0 26 1 12z" fill="#f0a820" />
        <path d="M2 9c4 9 12 15 20 18l-1 3C11 27 3 20 2 9z" fill="#fff" />
        <path d="M26 4c4 2 7 5 7 10l-5 6C30 14 29 9 26 4z" fill="#e86020" />
      </svg>
      <button type="button" aria-label="记事本" className="ml-[9px] flex w-[43px] justify-center border border-t-white border-r-[#404040] border-b-[#404040] border-l-white bg-[#e6e4df]">
        <svg viewBox="0 0 32 32" className="size-8" aria-hidden="true">
          <path d="M10 6l20 2-4 22-4-5L3 22z" fill="#6ab8d0" />
          <path d="M10 6l18 1-5 18-20-3z" fill="#98d8e8" />
          <path d="M27 8l3 2-3 20-4-3z" fill="#f0f4f4" stroke="#90a0a0" strokeWidth=".6" />
        </svg>
      </button>
      <button type="button" aria-label="应用" className="ml-[7px] flex w-[43px] justify-center border border-t-white border-r-[#404040] border-b-[#404040] border-l-white">
        <svg viewBox="0 0 32 32" className="size-8" aria-hidden="true">
          <circle cx="19" cy="15" r="12" fill="#f4f4f8" stroke="#283878" strokeWidth="4" />
          <path d="M9 17l8 3" stroke="#d06030" strokeWidth="3" />
        </svg>
      </button>
      <div className="ml-auto flex items-center border border-t-[#808080] border-r-white border-b-white border-l-[#808080] pr-1">
        <span className="mt-4 mr-2">28</span>
        <svg viewBox="0 0 16 13" className="mb-2 h-[13px] w-4" aria-hidden="true">
          <rect x=".5" y=".5" width="15" height="12" fill="#2858a8" stroke="#a8b8d0" />
          <path d="M1 1h14L5 9H1z" fill="#5a98e8" />
          <rect x="5" y="9.500" width="10" height="2.500" fill="#303840" />
          <path d="M1 9h4v3H1z" fill="#e8e040" />
          <path d="M1 9h2v1.500H1z" fill="#e04020" />
        </svg>
      </div>
    </footer>
  );
}

/* ---------- left list ---------- */

function SidePanel() {
  return (
    <aside className="relative flex w-[230px] shrink-0 flex-col">
      <div className="flex h-[27px] shrink-0 items-center bg-[linear-gradient(#dce9fd,#a9cbf8)] pl-0.5 text-[#15428b]">搜索:</div>
      <div className="flex min-h-0 flex-1 flex-col border-t border-l border-[#505050] bg-[#cdebcb]">
        <div className="flex-1" />
        <div className="flex h-4 shrink-0 bg-[#ecebe6]">
          <button type="button" aria-label="向左滚动" className="flex size-4 items-center justify-center border border-t-white border-r-[#404040] border-b-[#404040] border-l-white bg-[#d4d0c8]">
            <svg viewBox="0 0 4 7" className="h-[7px] w-1" aria-hidden="true"><path d="M4 0v7L0 3.500z" fill="#000" /></svg>
          </button>
          <div className="w-40 border border-t-white border-r-[#404040] border-b-[#404040] border-l-white bg-[#d4d0c8]" />
        </div>
      </div>
      <div className="mt-px flex h-[22px] shrink-0 items-center border border-[#6f9ee0] bg-white pl-[3px] text-black">床号</div>
      <div className="h-0.5 shrink-0 bg-[#6f9ee0]" />
      {/* obscured patient list */}
      <div className="absolute -top-[7px] right-0 -bottom-[21px] left-8 bg-[linear-gradient(#b2d4f0_0px,#b2d4ee99_35px,transparent_130px),linear-gradient(to_top,#cbced3_0px,#cbced6_50px,transparent_110px),linear-gradient(to_right,#c8e8cb_0%,#b3cfb5_22%,#a0bba1_50%,#a9beaa_68%,#c6c8be_96%,#c9c9c0_100%)]" />
    </aside>
  );
}

/* ---------- annotations ---------- */

function Annotations() {
  return (
    <>
      <svg viewBox="0 0 180 160" className="pointer-events-none absolute top-[209px] left-[813px] h-40 w-[180px]" aria-hidden="true">
        <path d="M0 0L32 16L23.500 19L179 156.500L176.500 159L21 22L19 31z" fill="#ff0000" stroke="#ff0000" strokeLinejoin="round" />
      </svg>
      <svg viewBox="0 0 168 64" className="pointer-events-none absolute top-[541px] left-[579px] h-16 w-[168px]" aria-hidden="true">
        <path d="M167 3L139 22L138 15L3 63L1 60L136 10L131 5z" fill="#ff0000" stroke="#ff0000" strokeLinejoin="round" />
      </svg>
      <p className="absolute top-[394px] left-[815px] text-2xl leading-7 whitespace-nowrap text-[#ff1a00] [-webkit-text-stroke:4px_#ffff00] [paint-order:stroke_fill]">
        择日床位会收住院诊查费，有参数设置 择日床位不收住院诊查费?
      </p>
    </>
  );
}

export default function App() {
  return (
    <div className="relative flex h-screen w-full flex-col overflow-hidden bg-[#d4d0c8] font-['Liberation_Sans','Noto_Sans_CJK_SC',sans-serif] text-xs leading-[14px]">
      <TitleBar />
      <MenuBar />
      <div className="h-[3px] shrink-0 border-t border-b border-t-[#6f9ee0] border-b-[#404040] bg-[#8a8a8a]" />
      <div className="flex min-h-0 flex-1 flex-col border-r-2 border-l-2 border-r-[#c9d4f0] border-l-[#505050]">
        <TabStrip />
        <div className="h-[3px] shrink-0 border-t border-b border-t-[#8fb0e4] border-b-[#707878] bg-white" />
        <div className="flex min-h-0 flex-1 flex-col pr-0.5 pl-0.5">
          <ToolBar />
          <div className="h-0.5 shrink-0 bg-[#5f92dc]" />
          <FilterPanel />
          <div className="h-px shrink-0 bg-[#5f92dc]" />
          <main className="flex min-h-0 flex-1">
            <SidePanel />
            <div className="w-2 shrink-0 border-l border-white bg-[linear-gradient(90deg,#c9dbfa,#7ba2e6)]" />
            <div className="flex min-w-0 flex-1 flex-col">
              <div className="min-h-0 flex-1 overflow-hidden border border-r-2 border-black bg-white">
                <ChargeGrid />
              </div>
              <div className="h-[7px] shrink-0 bg-[linear-gradient(#dfe3fb,#6f98e0)]" />
              <div className="h-[22px] shrink-0 bg-[linear-gradient(#dfecfe,#b3d5ff)]" />
              <div className="h-[194px] shrink-0 border border-black bg-white" />
              <div className="h-0.5 shrink-0 bg-[#c9d4f0]" />
            </div>
          </main>
        </div>
      </div>
      <TaskBar />
      <BedWindow />
      <Dialog />
      <Annotations />
    </div>
  );
}
